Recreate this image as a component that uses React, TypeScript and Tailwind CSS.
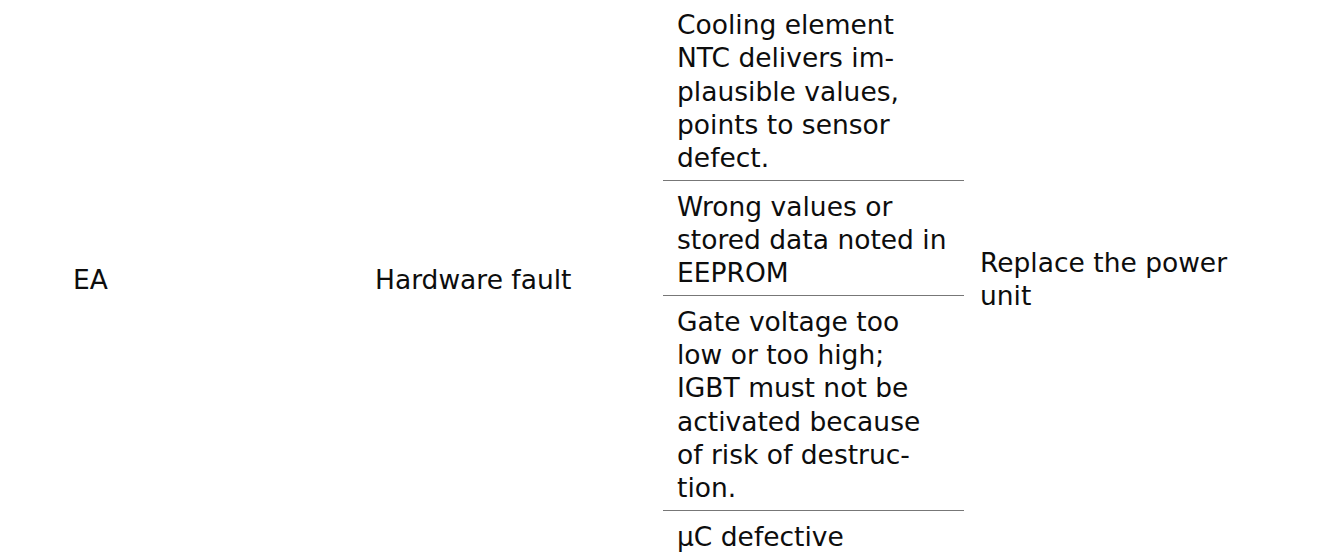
import React from "react";

export default function App() {
  const rows: string[][] = [
    ["Cooling element", "NTC delivers im-", "plausible values,", "points to sensor", "defect."],
    ["Wrong values or", "stored data noted in", "EEPROM"],
    ["Gate voltage too", "low or too high;", "IGBT must not be", "activated because", "of risk of destruc-", "tion."],
    ["\u00b5C defective"],
  ];
  return (
    <div
      className="w-[1337px] h-[554px] overflow-hidden bg-white text-[#0d0d0d] text-[26.5px] leading-[33.33px]"
      style={{ fontFamily: '"DejaVu Sans", Verdana, sans-serif' }}
    >
      <div className="flex mt-[-1px] ml-[59px]">
        <div className="w-[302px] pl-[14px] pt-[2px] flex items-center">EA</div>
        <div className="w-[302px] pl-[14px] pt-[2px] flex items-center">Hardware fault</div>
        <div className="w-[301px] flex flex-col">
          {rows.map((lines, i) => (
            <div
              key={i}
              className={`pl-[14px] pt-[9px] pb-[5px] ${i > 0 ? "border-t border-[#777]" : ""}`}
            >
              {lines.map((l, j) => (
                <div key={j} className="whitespace-nowrap">{l}</div>
              ))}
            </div>
          ))}
        </div>
        <div className="flex-1 pl-[16px] pt-[2px] flex items-center">
          <div>
            <div className="whitespace-nowrap">Replace the power</div>
            <div>unit</div>
          </div>
        </div>
      </div>
    </div>
  );
}
